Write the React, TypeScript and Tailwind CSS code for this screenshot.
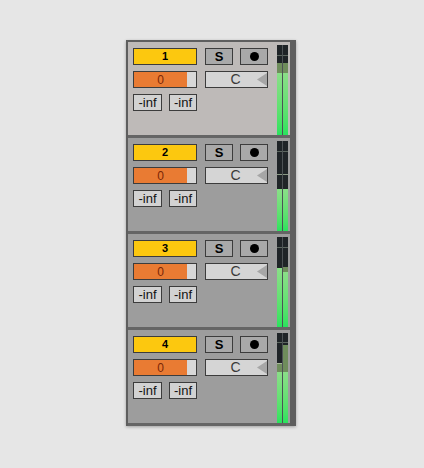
import React from 'react';

type Seg = { h?: number; c: string };

interface Track {
  name: string;
  selected?: boolean;
  meter: [Seg[], Seg[]];
}

const DARK = 'bg-[#1f2427]';
const LINE = 'bg-[#5d6760]';
const DIM = 'bg-[#6f8d5c]';
const BRIGHT = 'bg-gradient-to-b from-[#8ade88] to-[#27e35d]';

const TRACKS: Track[] = [
  {
    name: '1',
    selected: true,
    meter: [
      [{ h: 10, c: DARK }, { h: 1, c: LINE }, { h: 7, c: DARK }, { h: 10, c: DIM }, { c: BRIGHT }],
      [{ h: 10, c: DARK }, { h: 1, c: LINE }, { h: 7, c: DARK }, { h: 10, c: DIM }, { c: BRIGHT }],
    ],
  },
  {
    name: '2',
    meter: [
      [{ h: 10, c: DARK }, { h: 1, c: LINE }, { h: 22, c: DARK }, { h: 1, c: 'bg-[#8a9a86]' }, { h: 14, c: DARK }, { c: BRIGHT }],
      [{ h: 10, c: DARK }, { h: 1, c: LINE }, { h: 22, c: DARK }, { h: 1, c: 'bg-[#8a9a86]' }, { h: 14, c: DARK }, { c: BRIGHT }],
    ],
  },
  {
    name: '3',
    meter: [
      [{ h: 10, c: DARK }, { h: 1, c: LINE }, { h: 20, c: DARK }, { c: BRIGHT }],
      [{ h: 10, c: DARK }, { h: 1, c: LINE }, { h: 19, c: DARK }, { h: 5, c: DIM }, { c: BRIGHT }],
    ],
  },
  {
    name: '4',
    meter: [
      [{ h: 9, c: DARK }, { h: 1, c: LINE }, { h: 20, c: DARK }, { h: 1, c: 'bg-[#a9b79c]' }, { h: 8, c: DIM }, { c: BRIGHT }],
      [{ h: 9, c: DARK }, { h: 1, c: LINE }, { h: 2, c: DARK }, { h: 27, c: DIM }, { c: BRIGHT }],
    ],
  },
];

function Meter({ cols }: { cols: [Seg[], Seg[]] }) {
  return (
    <div className="mt-[3px] flex w-[11px] gap-[1px] bg-[#4d5255]">
      {cols.map((segs, i) => (
        <div key={i} className="flex w-[5px] flex-col">
          {segs.map((s, j) => (
            <div key={j} className={`${s.c} ${s.h === undefined ? 'flex-1' : ''}`} style={s.h !== undefined ? { height: s.h } : undefined} />
          ))}
        </div>
      ))}
    </div>
  );
}

function TrackRow({ track }: { track: Track }) {
  return (
    <div
      className={`flex h-[96px] border-b-[3px] border-[#656565] pl-[5px] pr-[2px] ${
        track.selected ? 'bg-[#bebab8]' : 'bg-[#9d9d9d]'
      }`}
    >
      {/* controls */}
      <div className="flex w-[135px] flex-col gap-[6px] pt-[6px]">
        <div className="flex h-[17px] gap-[8px]">
          <div className="flex w-[64px] items-center justify-center border border-[#3c3c3c] bg-[#fcc80f] text-[11px] font-bold text-black">
            {track.name}
          </div>
          <div className="flex w-[28px] items-center justify-center border border-[#3c3c3c] bg-[#a9a9a9] text-[13px] font-bold text-black">
            S
          </div>
          <div className="ml-[-1px] flex w-[28px] items-center justify-center border border-[#3c3c3c] bg-[#a9a9a9]">
            <div className="h-[9px] w-[9px] rounded-full bg-black" />
          </div>
        </div>
        <div className="flex h-[17px] gap-[8px]">
          <div className="flex w-[64px] border border-[#3c3c3c] bg-[#d8d8d8]">
            <div className="flex w-[53px] items-center justify-center bg-[#e97b33] text-[12px] text-[#7a2606]">0</div>
          </div>
          <div className="flex w-[63px] items-center border border-[#3c3c3c] bg-[#d5d5d5]">
            <span className="flex-1 pl-[8px] text-center text-[14px] text-[#3a3a3a]">C</span>
            <svg width="10" height="13" viewBox="0 0 10 13">
              <polygon points="10,0 10,13 0,6.5" fill="#a6a6a6" />
            </svg>
          </div>
        </div>
        <div className="flex h-[17px] gap-[7px]">
          <div className="flex w-[29px] items-center justify-center border border-[#3c3c3c] bg-[#d2d2d2] text-[13px] text-[#111]">
            -inf
          </div>
          <div className="flex w-[28px] items-center justify-center border border-[#3c3c3c] bg-[#d2d2d2] text-[13px] text-[#111]">
            -inf
          </div>
        </div>
      </div>
      <div className="ml-[9px] flex h-[93px]">
        <Meter cols={track.meter} />
      </div>
    </div>
  );
}

export default function App() {
  return (
    <div className="h-[468px] w-[424px] bg-[#e6e6e6] pl-[126px] pt-[40px]" style={{ fontFamily: '"Liberation Sans", Arial, sans-serif' }}>
      <div className="w-[170px] border-l-2 border-r-[6px] border-t-2 border-[#5e5e5e] shadow-[0_1px_3px_rgba(0,0,0,0.3)]">
        {TRACKS.map((t) => (
          <TrackRow key={t.name} track={t} />
        ))}
      </div>
    </div>
  );
}
